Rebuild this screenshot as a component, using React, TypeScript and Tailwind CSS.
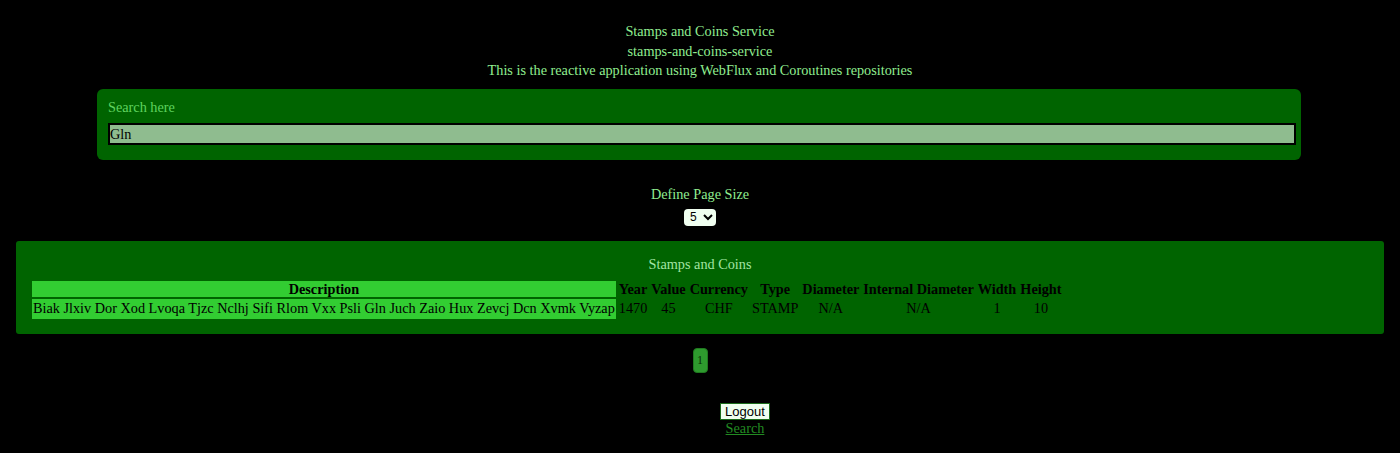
import React from 'react';

const rows = [
  {
    description: 'Biak Jlxiv Dor Xod Lvoqa Tjzc Nclhj Sifi Rlom Vxx Psli Gln Juch Zaio Hux Zevcj Dcn Xvmk Vyzap',
    year: '1470',
    value: '45',
    currency: 'CHF',
    type: 'STAMP',
    diameter: 'N/A',
    internalDiameter: 'N/A',
    width: '1',
    height: '10',
  },
];

const headers = ['Year', 'Value', 'Currency', 'Type', 'Diameter', 'Internal Diameter', 'Width', 'Height'];

const App: React.FC = () => {
  return (
    <div className="min-h-[453px] bg-black text-[#90ee90] font-['Liberation_Serif',serif] text-[14.25px] leading-[19.5px] pt-[22px]">
      <div className="text-center">
        <div>Stamps and Coins Service</div>
        <div>stamps-and-coins-service</div>
        <div>This is the reactive application using WebFlux and Coroutines repositories</div>
      </div>

      <div className="ml-[97px] mr-[99px] mt-[8px] rounded-md bg-[#006400] pl-[11px] pr-[5px] pt-[9px] pb-[15px]">
        <div className="text-[#5fd35f] mb-[6px]">Search here</div>
        <input
          defaultValue="Gln"
          className="block w-full h-[22px] border-2 border-black bg-[#8fbc8f] px-0 text-black text-[14.25px] outline-none font-['Liberation_Serif',serif]"
        />
      </div>

      <div className="mt-[25px] text-center">
        <div>Define Page Size</div>
        <select className="mt-[4px] w-[32px] h-[17px] bg-[#f0fff0] text-black text-[12px] font-['Liberation_Sans',sans-serif] rounded-sm px-[2px]">
          <option>5</option>
          <option>10</option>
          <option>20</option>
        </select>
      </div>

      <div className="mx-[16px] mt-[14px] rounded-[3px] bg-[#006400] px-[16px] pt-[14px] pb-[13px]">
        <div className="text-center text-[#a3e4a3] mb-[5px]">Stamps and Coins</div>
        <table className="border-separate border-spacing-[2px] -ml-[2px] text-black">
          <thead>
            <tr>
              <th className="bg-[#32cd32] font-bold px-[1px] leading-[16px]">Description</th>
              {headers.map((h) => (
                <th key={h} className="font-bold px-[1px] leading-[16px]">
                  {h}
                </th>
              ))}
            </tr>
          </thead>
          <tbody>
            {rows.map((r, i) => (
              <tr key={i}>
                <td className="bg-[#32cd32] px-[1px] leading-[19px] whitespace-nowrap">{r.description}</td>
                <td className="text-center px-[1px]">{r.year}</td>
                <td className="text-center px-[1px]">{r.value}</td>
                <td className="text-center px-[1px]">{r.currency}</td>
                <td className="text-center px-[1px]">{r.type}</td>
                <td className="text-center px-[1px]">{r.diameter}</td>
                <td className="text-center px-[1px]">{r.internalDiameter}</td>
                <td className="text-center px-[1px]">{r.width}</td>
                <td className="text-center px-[1px]">{r.height}</td>
              </tr>
            ))}
          </tbody>
        </table>
      </div>

      <div className="mt-[14px] flex justify-center">
        <button className="w-[15px] h-[25px] rounded-[4px] bg-[#2e9a2e] border border-[#1f7a1f] text-[#063006] text-[12px] leading-none font-['Liberation_Serif',serif]">
          1
        </button>
      </div>

      <div className="mt-[30px] ml-[90px] flex flex-col items-center">
        <button className="w-[50px] h-[17px] bg-[#f0fff0] border border-[#1a6b1a] text-black text-[13px] leading-none font-['Liberation_Sans',sans-serif]">
          Logout
        </button>
        <a href="#" className="text-[#228b22] underline leading-[17px]">
          Search
        </a>
      </div>
    </div>
  );
};

export default App;
